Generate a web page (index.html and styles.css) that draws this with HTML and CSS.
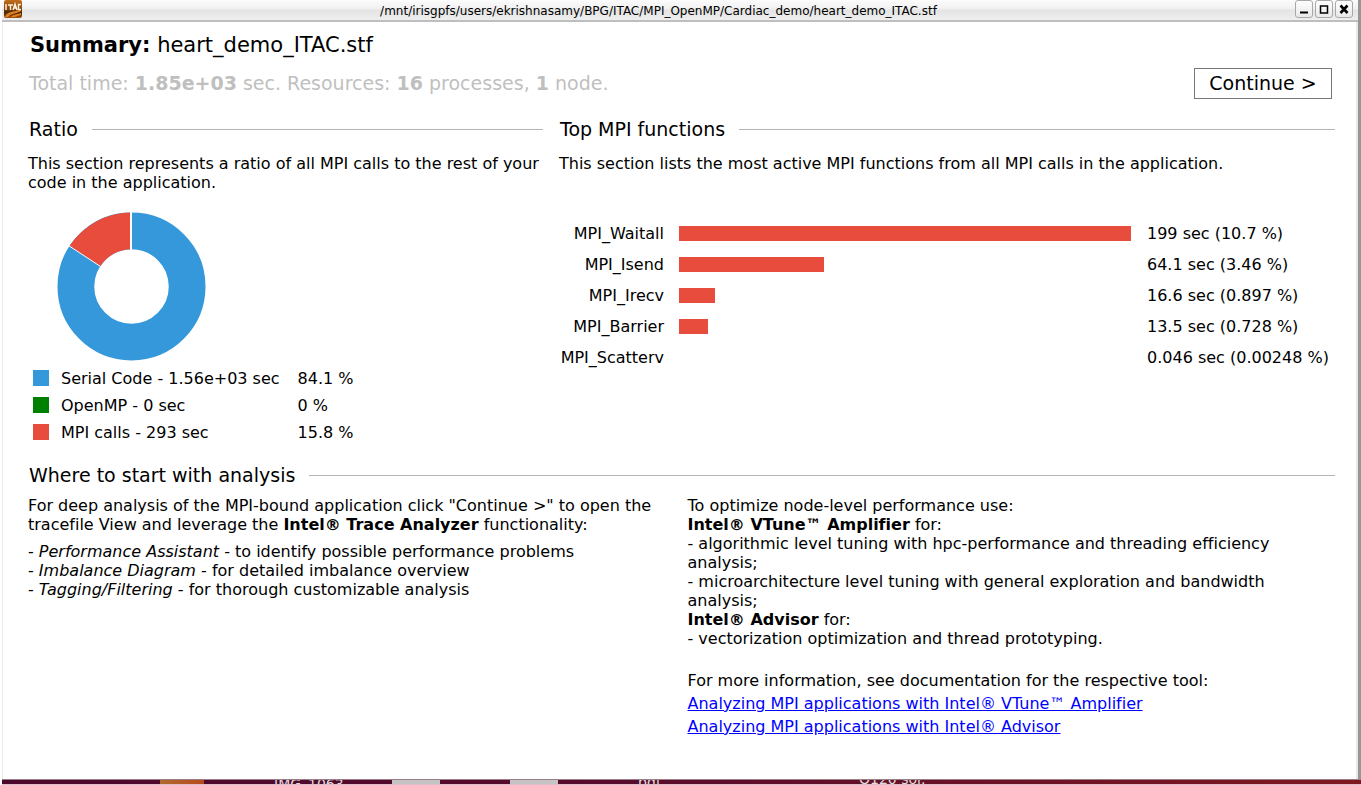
FILE: index.html
```html
<!DOCTYPE html>
<html lang="en">
<head>
<meta charset="utf-8">
<title>heart_demo_ITAC.stf</title>
<link rel="stylesheet" href="styles.css">
</head>
<body>
<div class="window">
  <header class="titlebar">
    <svg class="app-icon" viewBox="0 0 18 18" aria-hidden="true">
      <defs>
        <linearGradient id="amber" x1="0" y1="0" x2="0" y2="1">
          <stop offset="0" stop-color="#c4701c"/>
          <stop offset="0.5" stop-color="#84440e"/>
          <stop offset="0.7" stop-color="#4a2408"/>
          <stop offset="1" stop-color="#a8540c"/>
        </linearGradient>
      </defs>
      <rect width="18" height="18" rx="2" fill="url(#amber)"/>
      <path d="M1 17C4 10 10 13 17 9V11C12 14 7 13 4 17ZM7 17C9 14 13 15 17 13V15C14 16 12 16 11 17Z" fill="#e08020"/>
      <path d="M2 4V10M4 5H9M6.500 5V10M9 10L11 4L13 10M10 8H12M17 4.500H14.500V9.500H17" fill="none" stroke="#fff0d8" stroke-width="1.500"/>
    </svg>
    <span class="path">/mnt/irisgpfs/users/ekrishnasamy/BPG/ITAC/MPI_OpenMP/Cardiac_demo/heart_demo_ITAC.stf</span>
    <div class="controls">
      <button type="button" aria-label="Minimize"><svg viewBox="0 0 16 16"><path d="M4 11.500H12" stroke-width="2"/></svg></button>
      <button type="button" aria-label="Maximize"><svg viewBox="0 0 16 16"><path d="M4.500 5H11.500V12H4.500ZM4 5H12" stroke-width="1.500"/></svg></button>
      <button type="button" aria-label="Close"><svg viewBox="0 0 16 16"><path d="M4.500 4.500L11.500 12M11.500 4.500L4.500 12" stroke-width="2.600"/></svg></button>
    </div>
  </header>
  <main class="content">
    <h1 class="summary"><strong>Summary:</strong> heart_demo_ITAC.stf</h1>
    <div class="overview">
      <p class="totals">Total time: <strong>1.85e+03</strong> sec. Resources: <strong>16</strong> processes, <strong>1</strong> node.</p>
      <button type="button" class="continue">Continue &gt;</button>
    </div>
    <div class="charts">
      <section>
        <h2 class="heading">Ratio</h2>
        <p>This section represents a ratio of all MPI calls to the rest of your code in the application.</p>
        <svg class="donut" viewBox="0 0 150 150" role="img" aria-label="Ratio of MPI calls to serial code">
          <circle cx="75" cy="75" r="56" fill="none" stroke="#3498db" stroke-width="37"/>
          <circle cx="75" cy="75" r="56" fill="none" stroke="#e74c3c" stroke-width="37" pathLength="100" stroke-dasharray="15.800 84.200" transform="rotate(213.100 75 75)"/>
          <path d="M74.500 0V38" stroke="#fff" stroke-width="2"/>
          <path d="M12 34L44 55" stroke="#fff" stroke-width="1"/>
        </svg>
        <table class="legend">
          <tr><th scope="row"><span class="swatch serial"></span>Serial Code - 1.56e+03 sec</th><td>84.1 %</td></tr>
          <tr><th scope="row"><span class="swatch openmp"></span>OpenMP - 0 sec</th><td>0 %</td></tr>
          <tr><th scope="row"><span class="swatch mpi"></span>MPI calls - 293 sec</th><td>15.8 %</td></tr>
        </table>
      </section>
      <section>
        <h2 class="heading">Top MPI functions</h2>
        <p>This section lists the most active MPI functions from all MPI calls in the application.</p>
        <table class="functions">
          <tr><th scope="row">MPI_Waitall</th><td class="track"><div class="bar" style="width:100%"></div></td><td>199 sec (10.7 %)</td></tr>
          <tr><th scope="row">MPI_Isend</th><td class="track"><div class="bar" style="width:32%"></div></td><td>64.1 sec (3.46 %)</td></tr>
          <tr><th scope="row">MPI_Irecv</th><td class="track"><div class="bar" style="width:8%"></div></td><td>16.6 sec (0.897 %)</td></tr>
          <tr><th scope="row">MPI_Barrier</th><td class="track"><div class="bar" style="width:6.5%"></div></td><td>13.5 sec (0.728 %)</td></tr>
          <tr><th scope="row">MPI_Scatterv</th><td class="track"><div class="bar" style="width:0%"></div></td><td>0.046 sec (0.00248 %)</td></tr>
        </table>
      </section>
    </div>
    <section class="start">
      <h2 class="heading">Where to start with analysis</h2>
      <div class="advice">
        <div>
          <p>For deep analysis of the MPI-bound application click "Continue &gt;" to open the tracefile View and leverage the <strong>Intel® Trace Analyzer</strong> functionality:</p>
          <ul class="tips">
            <li>- <em>Performance Assistant</em> - to identify possible performance problems</li>
            <li>- <em>Imbalance Diagram</em> - for detailed imbalance overview</li>
            <li>- <em>Tagging/Filtering</em> - for thorough customizable analysis</li>
          </ul>
        </div>
        <div>
          <p>To optimize node-level performance use:</p>
          <p><strong>Intel® VTune™ Amplifier</strong> for:</p>
          <p>- algorithmic level tuning with hpc-performance and threading efficiency analysis;</p>
          <p>- microarchitecture level tuning with general exploration and bandwidth analysis;</p>
          <p><strong>Intel® Advisor</strong> for:</p>
          <p>- vectorization optimization and thread prototyping.</p>
          <div class="docs">
            <p>For more information, see documentation for the respective tool:</p>
            <a href="#vtune">Analyzing MPI applications with Intel® VTune™ Amplifier</a>
            <a href="#advisor">Analyzing MPI applications with Intel® Advisor</a>
          </div>
        </div>
      </div>
    </section>
  </main>
</div>
<div class="desktop">
  <span class="folder"></span>
  <span class="file first"></span>
  <span class="file second"></span>
  <span class="name image">IMG_1063</span>
  <span class="name pdf">pdf</span>
  <span class="name notes">Q120 sol.</span>
</div>
</body>
</html>
```
FILE: styles.css
```css
* { box-sizing: border-box; }

body {
  margin: 0;
  padding-left: 2px;
  min-height: 100vh;
  display: flex;
  flex-direction: column;
  background: #fff;
  color: #000;
  font: 16px/19px "DejaVu Sans", sans-serif;
  font-variant-ligatures: none;
}

h1, h2, p, ul { margin: 0; padding: 0; font-weight: normal; }

button { font-family: inherit; color: inherit; padding: 0; }

.window {
  flex: 1;
  display: flex;
  flex-direction: column;
  border-right: 3px solid #969696;
}

.titlebar {
  display: flex;
  align-items: center;
  height: 22px;
  padding: 0 5px 2px 2px;
  border-bottom: 2px solid #bebebe;
  background: linear-gradient(#fcfcfc, #f0f0f0 45%, #e4e4e4 50%, #eee);
}

.app-icon { width: 18px; height: 18px; }

.path { flex: 1; padding-top: 4px; text-align: center; font-size: 12px; }

.controls { display: flex; gap: 2px; }

.controls button {
  width: 18px;
  height: 18px;
  border: 1px solid #a8a8a8;
  border-radius: 3px;
  background: linear-gradient(#fff, #e8e8e8);
}

.controls svg { display: block; width: 16px; height: 16px; fill: none; stroke: #000; }

.content {
  flex: 1;
  padding: 10px 21px 0 25px;
  border-left: 1px solid #ececec;
  border-right: 2px solid #e8e8e8;
}

.summary { padding-left: 2px; font-size: 21px; line-height: 26px; }

.overview { display: flex; justify-content: space-between; align-items: center; margin-top: 10px; padding: 0 3px 0 1px; }

.totals { padding-bottom: 2px; color: #bfbfbf; font-size: 19px; line-height: 24px; }

.continue { width: 138px; height: 31px; padding-bottom: 2px; border: 1px solid #777; background: #fff; font-size: 19px; }

.charts { display: grid; grid-template-columns: 515fr 776fr; gap: 16px; margin-top: 18px; }

.heading { display: flex; align-items: center; gap: 14px; padding-left: 1px; font-size: 19px; line-height: 24px; }

.heading::after { content: ""; flex: 1; height: 1px; background: #b4b4b4; }

.charts .heading { margin-bottom: 13px; }

.donut { display: block; width: 149px; height: 149px; margin: 20px 0 4px 29px; }

table { border-collapse: collapse; }

th, td { padding: 0; font-weight: normal; text-align: left; }

.legend { margin-left: 5px; }

.legend th, .legend td { height: 27px; }

.legend th { padding-right: 18px; }

.swatch { display: inline-block; width: 16px; height: 16px; margin-right: 12px; vertical-align: -2px; }

.serial { background: #3498db; }

.openmp { background: #008000; }

.mpi { background: #e74c3c; }

.functions { width: 100%; margin-top: 45px; }

.functions th, .functions td { height: 31px; white-space: nowrap; }

.functions th { width: 105px; text-align: right; }

.functions td:last-child { width: 188px; }

.functions .track { padding: 0 16px 0 15px; }

.bar { height: 15px; background: #e74c3c; }

.start { margin-top: 17px; }

.advice { display: grid; grid-template-columns: 1fr 1fr; gap: 12px; margin-top: 9px; }

.tips { margin-top: 8px; list-style: none; }

.docs { display: flex; flex-direction: column; align-items: flex-start; gap: 4px; margin-top: 23px; }

.docs a { color: #00f; }

.desktop {
  position: relative;
  height: 6px;
  overflow: hidden;
  border-top: 1px solid #9a7f89;
  border-bottom: 1px solid #e3bccb;
  background: linear-gradient(90deg, #4b082c, #560b2c 45%, #7e1820);
}

.folder, .file, .name { position: absolute; top: 0; }

.folder { left: 158px; width: 44px; height: 4px; background: linear-gradient(90deg, #b06a30, #b84a18); }

.file { width: 48px; height: 4px; background: #c4c4c4; }

.first { left: 390px; }

.second { left: 508px; }

.name { color: #ddd; font-size: 14px; line-height: 14px; }

.image { top: -3px; left: 272px; }

.pdf { top: -5px; left: 636px; }

.notes { top: -8px; left: 857px; }
```
